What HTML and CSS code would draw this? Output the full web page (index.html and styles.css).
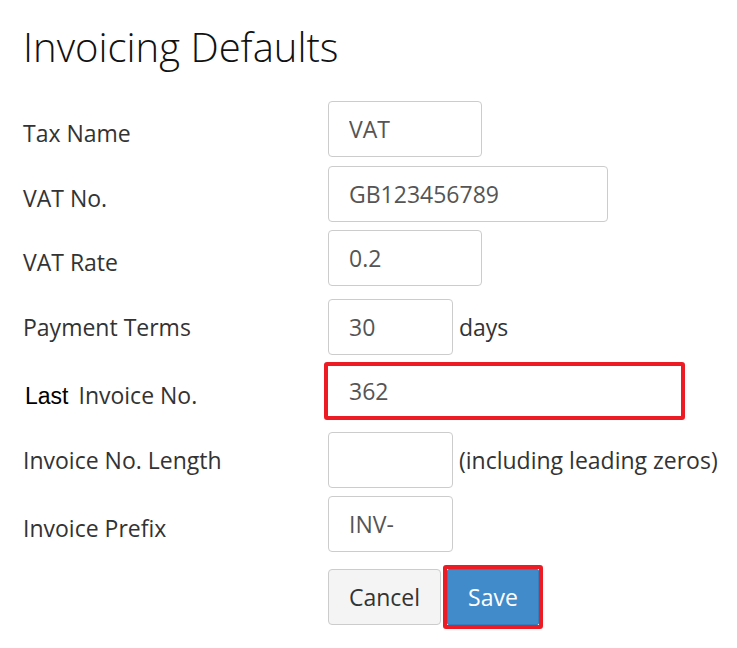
FILE: index.html
```html
<!DOCTYPE html>
<html>
<head>
<meta charset="utf-8">
<link rel="stylesheet" href="styles.css">
</head>
<body>
<div class="page">
  <h1 class="title">Invoicing Defaults</h1>
  <form class="form">
    <div class="row r1">
      <label class="label">Tax Name</label>
      <div class="field"><input class="input w-sm" value="VAT"></div>
    </div>
    <div class="row r2">
      <label class="label">VAT No.</label>
      <div class="field"><input class="input w-md" value="GB123456789"></div>
    </div>
    <div class="row r3">
      <label class="label">VAT Rate</label>
      <div class="field"><input class="input w-sm" value="0.2"></div>
    </div>
    <div class="row r4">
      <label class="label label-inline">Payment Terms</label>
      <div class="field"><input class="input w-xs" value="30"><span class="suffix">days</span></div>
    </div>
    <div class="row r5">
      <label class="label label-last"><span class="alt-font">Last</span> Invoice No.</label>
      <div class="field"><input class="input input-highlight" value="362"></div>
    </div>
    <div class="row r6">
      <label class="label label-inline">Invoice No. Length</label>
      <div class="field"><input class="input w-xs" value=""><span class="suffix">(including leading zeros)</span></div>
    </div>
    <div class="row r7">
      <label class="label">Invoice Prefix</label>
      <div class="field"><input class="input w-xs" value="INV-"></div>
    </div>
    <div class="row actions">
      <div class="label"></div>
      <div class="field">
        <button type="button" class="btn btn-default">Cancel</button>
        <span class="highlight-ring"><button type="button" class="btn btn-primary">Save</button></span>
      </div>
    </div>
  </form>
</div>
</body>
</html>
```
FILE: styles.css
```css
* { box-sizing: border-box; }
html, body { margin: 0; padding: 0; background: #fff; }
body {
  font-family: "Open Sans", "Liberation Sans", sans-serif;
  color: #333;
  font-size: 23px;
}
.page { padding: 0 0 0 23px; }
.title {
  margin: 0;
  padding-top: 19px;
  font-weight: 300;
  font-size: 40px;
  line-height: 56px;
  color: #111;
  letter-spacing: 0;
}
.form { margin-top: 26px; }
.row { display: flex; align-items: center; }
.r2 { margin-top: 9px; }
.r3 { margin-top: 8px; }
.r4 { margin-top: 13px; }
.r5 { margin-top: 7px; }
.r6 { margin-top: 12px; }
.r7 { margin-top: 8px; }
.actions { margin-top: 13px; }
.label {
  width: 305px;
  flex: none;
  padding-top: 8px;
  line-height: 30px;
}
.label-inline { padding-top: 0; }
.label-last { padding-left: 2px; }
.alt-font { font-family: "Liberation Sans", Arial, sans-serif; color: #000; font-size: 23px; margin-right: 4px; }
.field { display: flex; align-items: center; }
.input {
  height: 56px;
  border: 1px solid #ccc;
  border-radius: 4px;
  padding: 0 20px;
  font-family: "Open Sans", sans-serif;
  font-size: 23px;
  color: #555;
  background: #fff;
  outline: none;
}
.w-xs { width: 125px; }
.w-sm { width: 154px; }
.w-md { width: 280px; }
.input-highlight {
  width: 361px;
  height: 58px;
  margin-left: -4px;
  border: 4px solid #ed1c24;
  border-radius: 3px;
  padding-left: 21px;
}
.suffix { margin-left: 6px; }
.btn {
  height: 56px;
  border-radius: 4px;
  font-family: "Open Sans", sans-serif;
  font-size: 23px;
  padding: 0 10px;
  cursor: pointer;
}
.btn-default {
  width: 113px;
  background: #f4f4f4;
  border: 1px solid #ccc;
  color: #333;
}
.highlight-ring {
  display: inline-flex;
  margin-left: 2px;
  border: 4px solid #ed1c24;
  border-radius: 3px;
}
.btn-primary {
  width: 92px;
  background: #428bca;
  border: 1px solid #357ebd;
  color: #fff;
  border-radius: 2px;
}
```
